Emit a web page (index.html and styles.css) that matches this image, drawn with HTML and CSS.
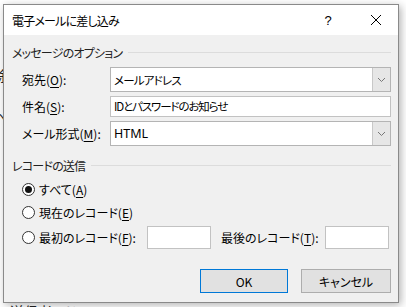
FILE: index.html
```html
<html>

<head>
  <title>電子メールに差し込み</title>
  <link rel="stylesheet" href="styles.css">
</head>

<body>
  <div class="doc">
    <p class="line l1">除</p>
    <p class="line l2">へ</p>
    <p class="line l3">:</p>
    <p class="line l4"><a href="#">t</a></p>
    <p class="line l5">(</p>
    <p class="line l6">送信者アドレス</p>
  </div>

  <div class="dialog">
    <div class="titlebar">
      <span class="title">電子メールに差し込み</span>
      <span class="help">?</span>
      <span class="close">
        <svg width="12" height="12" viewBox="0 0 12 12">
          <path d="M1 1L11 11M11 1L1 11" stroke="#000" stroke-width="1" fill="none" />
        </svg>
      </span>
    </div>

    <div class="content">
      <div class="group-head"><span>メッセージのオプション</span></div>

      <div class="form">
        <label>宛先(<u>O</u>):</label>
        <div class="combo">
          <span class="value">メールアドレス</span>
          <span class="drop"><svg width="9" height="6" viewBox="0 0 9 6"><path d="M1 1L4.5 4.5L8 1" stroke="#777" fill="none" /></svg></span>
        </div>

        <label>件名(<u>S</u>):</label>
        <div class="field">IDとパスワードのお知らせ</div>

        <label>メール形式(<u>M</u>):</label>
        <div class="combo">
          <span class="value latin">HTML</span>
          <span class="drop"><svg width="9" height="6" viewBox="0 0 9 6"><path d="M1 1L4.5 4.5L8 1" stroke="#777" fill="none" /></svg></span>
        </div>
      </div>

      <div class="group-head second"><span>レコードの送信</span></div>

      <div class="radios">
        <div class="radio-row r1"><span class="radio checked"></span><span>すべて(<u>A</u>)</span></div>
        <div class="radio-row r2"><span class="radio"></span><span>現在のレコード(<u>E</u>)</span></div>
        <div class="radio-row r3">
          <span class="radio"></span>
          <span class="range-label">最初のレコード(<u>F</u>):</span>
          <span class="small-field"></span>
          <span class="range-label last">最後のレコード(<u>T</u>):</span>
          <span class="small-field"></span>
        </div>
      </div>

      <div class="buttons">
        <button class="button default">OK</button>
        <button class="button cancel">キャンセル</button>
      </div>
    </div>
  </div>
</body>

</html>
```

FILE: styles.css
```css
body {
  margin: 0;
  background: #fff;
  font-family: 'Noto Sans CJK JP', 'Noto Sans', sans-serif;
  font-feature-settings: "palt";
  font-size: 12px;
  color: #000;
  overflow: hidden;
  width: 406px;
  height: 307px;
}

p {
  margin: 0;
}

u {
  text-decoration-thickness: 1px;
  text-underline-offset: 2px;
}

/* document behind the dialog */
.doc {
  height: 307px;
  overflow: hidden;
  margin-left: -6px;
  font-size: 14px;
  line-height: 16px;
  color: #222;
}

.line {
  height: 16px;
}

.l1 { margin-top: 67px; }
.l2 { margin-top: 26px; }
.l3 { margin-top: 18px; }
.l4 { margin-top: 32px; }
.l5 { margin-top: 4px; }
.l6 { margin-top: 76px; margin-left: 16px; }

.doc a {
  color: #1a5fb4;
}

/* dialog window */
.dialog {
  position: absolute;
  left: 3px;
  top: 4px;
  width: 394px;
  height: 297px;
  border: 1px solid #8a8a8a;
  background: #f0f0f0;
  box-shadow: 2px 2px 8px rgb(0 0 0 / 30%);
  display: flex;
  flex-direction: column;
}

.titlebar {
  height: 30px;
  background: #fff;
  display: flex;
  align-items: center;
  padding-left: 8px;
  flex-shrink: 0;
}

.title {
  flex: 1;
  font-size: 12px;
  letter-spacing: -0.8px;
}

.help {
  width: 20px;
  text-align: center;
  font-family: 'Liberation Sans', sans-serif;
  font-size: 13px;
  margin-right: 32px;
}

.close {
  display: flex;
  margin-right: 16px;
}

.content {
  padding: 9px 7px 0 8px;
}

.group-head {
  display: flex;
  align-items: center;
  gap: 6px;
  height: 16px;
  color: #222;
}

.group-head span {
  letter-spacing: -0.8px;
}

.group-head::after {
  content: '';
  flex: 1;
  border-top: 1px solid #dcdcdc;
}

.group-head.second {
  margin-top: 11px;
}

.form {
  display: grid;
  grid-template-columns: 88px 1fr;
  grid-template-rows: 25px 21px 25px;
  row-gap: 4px;
  align-items: center;
  margin-top: 7px;
  padding-left: 10px;
}

.form label {
  line-height: 16px;
}

.combo {
  height: 25px;
  box-sizing: border-box;
  border: 1px solid #b4b4b4;
  background: #fff;
  display: flex;
  align-items: center;
}

.combo .value {
  flex: 1;
  padding-left: 3px;
  font-size: 11.5px;
  letter-spacing: -0.8px;
}

.combo .latin {
  font-family: 'Noto Sans', sans-serif;
  font-size: 12.5px;
  letter-spacing: 0;
}

.drop {
  width: 17px;
  height: 100%;
  border-left: 1px solid #c8c8c8;
  background: #e6e6e6;
  display: flex;
  align-items: center;
  justify-content: center;
}

.field {
  height: 21px;
  box-sizing: border-box;
  border: 1px solid #c2c2c2;
  background: #fff;
  padding-left: 3px;
  line-height: 19px;
  margin-top: -1px;
  font-size: 11.5px;
  letter-spacing: -1.1px;
}

.radios {
  padding-left: 10px;
}

.radio-row {
  display: flex;
  align-items: center;
  gap: 4px;
  height: 16px;
  white-space: nowrap;
}

.r1 { margin-top: 8px; }
.r2 { margin-top: 7px; }

.r3 {
  margin-top: 6px;
  height: 23px;
}

.radio {
  width: 13px;
  height: 13px;
  box-sizing: border-box;
  border: 1px solid #333;
  border-radius: 50%;
  background: #fff;
  display: flex;
  align-items: center;
  justify-content: center;
}

.radio.checked::after {
  content: '';
  width: 7px;
  height: 7px;
  border-radius: 50%;
  background: #111;
}

.range-label {
  width: 104px;
}

.range-label.last {
  width: 100px;
  margin-left: 6px;
}

.small-field {
  width: 64px;
  height: 23px;
  box-sizing: border-box;
  border: 1px solid #c2c2c2;
  background: #fff;
}

.buttons {
  display: flex;
  justify-content: flex-end;
  gap: 13px;
  margin-top: 20px;
}

.button {
  height: 24px;
  font-family: inherit;
  font-feature-settings: "palt";
  font-size: 12px;
  background: #e1e1e1;
  border: 1px solid #adadad;
  padding: 0;
  color: #000;
}

.button.default {
  width: 88px;
  border-color: #0078d7;
}

.button.cancel {
  width: 90px;
}
```
